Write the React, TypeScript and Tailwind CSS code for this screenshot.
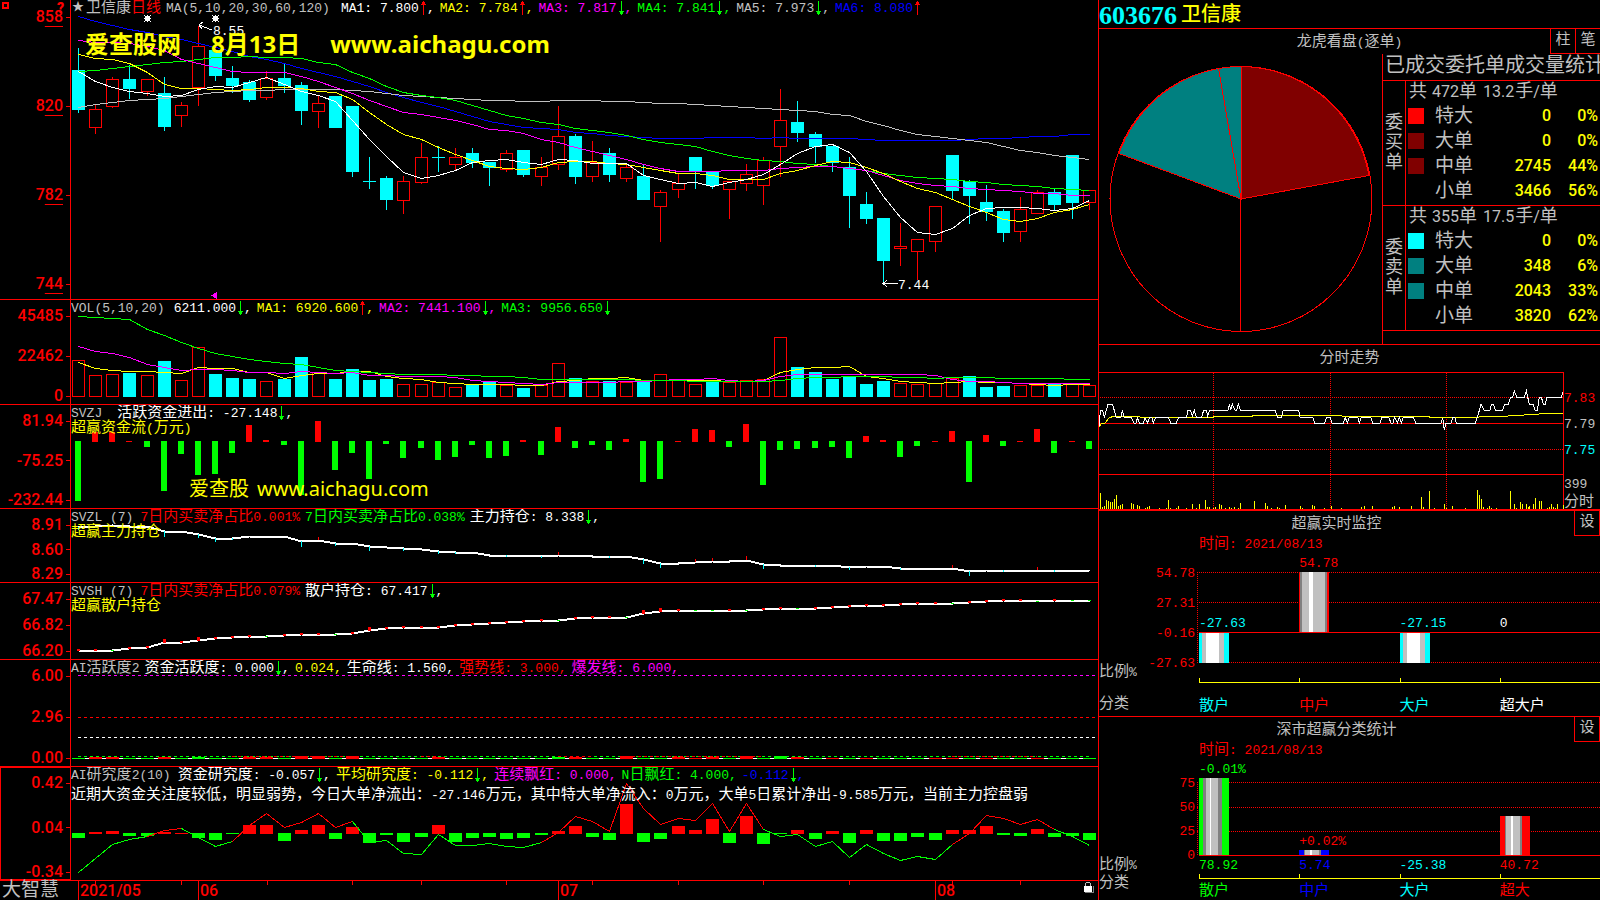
import React from "react";
import clsx from "clsx";

// [colour, high, body top, body bottom, low]
type Candle = [string, number, number, number, number];

const candles: Candle[] = [
  ["c", 48, 70, 110, 113], ["r", 105, 109, 127, 134], ["r", 77, 79, 106, 108], ["c", 65, 79, 89, 99],
  ["r", 79, 79, 91, 96], ["c", 77, 93, 127, 131], ["r", 102, 105, 115, 127], ["r", 26, 46, 87, 106],
  ["c", 50, 50, 76, 81], ["c", 66, 78, 86, 93], ["c", 80, 82, 100, 102], ["r", 71, 78, 97, 100],
  ["c", 64, 78, 86, 93], ["c", 82, 85, 111, 125], ["r", 96, 103, 111, 128], ["c", 96, 96, 128, 128],
  ["c", 106, 106, 172, 177], ["c", 157, 181, 182, 189], ["c", 176, 178, 200, 210], ["r", 176, 181, 200, 214],
  ["r", 143, 157, 182, 184], ["c", 146, 157, 158, 172], ["r", 148, 157, 164, 170], ["c", 148, 153, 163, 168],
  ["c", 162, 162, 168, 186], ["r", 150, 153, 169, 172], ["c", 150, 150, 175, 177], ["r", 157, 167, 176, 186],
  ["r", 106, 136, 164, 170], ["c", 134, 136, 177, 184], ["r", 141, 162, 176, 182], ["c", 148, 153, 175, 182],
  ["r", 163, 167, 178, 182], ["c", 164, 176, 200, 200], ["r", 190, 192, 206, 242], ["r", 174, 183, 189, 198],
  ["c", 157, 157, 171, 189], ["c", 171, 171, 186, 189], ["r", 181, 181, 189, 219], ["r", 164, 174, 183, 191],
  ["r", 157, 160, 185, 205], ["r", 89, 120, 146, 177], ["c", 101, 122, 133, 142], ["c", 132, 134, 147, 163],
  ["c", 146, 146, 163, 172], ["c", 157, 167, 196, 228], ["c", 192, 204, 219, 224], ["c", 218, 218, 261, 283],
  ["r", 223, 246, 248, 266], ["r", 239, 239, 251, 280], ["r", 206, 206, 241, 252], ["c", 155, 155, 191, 200],
  ["c", 180, 181, 196, 224], ["c", 185, 202, 212, 221], ["c", 209, 211, 233, 242], ["r", 197, 209, 231, 242],
  ["r", 190, 192, 213, 213], ["c", 188, 192, 205, 210], ["c", 155, 155, 203, 219], ["r", 190, 190, 202, 210],
];

const ma6 = [16,21,25,29,32,36,39,43,47,51,56,59,63,68,72,76,81,86,92,97,102,106,111,116,121,124,127,128,129,132,133,135,136,137,138,138,138,137,137,137,138,137,138,138,138,138,139,140,140,140,140,140,139,138,138,137,136,136,134,134];
const ma5 = [107,104,102,100,99,98,96,94,92,91,90,90,89,89,89,89,90,91,93,95,96,97,98,99,100,100,101,101,100,100,100,101,101,102,103,103,104,105,106,107,108,109,110,111,114,115,121,125,130,134,136,138,140,142,146,150,152,155,157,159];
const ma4 = [71,70,68,66,64,62,61,59,57,57,56,57,57,58,62,64,72,78,86,92,95,97,100,105,110,115,118,122,124,128,130,132,135,139,142,144,146,151,155,158,160,161,163,164,166,168,170,173,175,177,178,179,181,182,184,185,186,188,189,190];
const ma3 = [40,42,42,43,46,50,59,63,67,71,72,72,72,76,81,87,93,100,106,112,114,117,120,124,129,130,133,139,142,147,151,155,159,164,168,171,171,171,170,170,170,168,167,166,166,168,170,175,180,183,185,186,188,189,190,191,193,193,195,195];
const ma2 = [54,58,59,63,72,84,88,88,89,90,89,87,87,88,91,92,99,112,124,134,139,147,154,160,166,168,169,167,162,161,161,163,164,167,170,173,173,175,179,179,179,173,170,165,161,162,167,173,181,188,192,199,206,212,219,221,218,212,209,204];
const ma1 = [71,81,87,91,93,96,95,89,86,87,82,77,84,91,95,101,120,139,156,172,178,175,170,162,160,159,162,164,159,160,163,163,163,175,179,183,182,186,182,179,174,164,153,146,144,152,171,196,217,232,234,228,215,208,207,207,208,210,208,200];

const volColors = "rrrcrcrrcccrccrccccrrrrccrcrrcrcrcrrrcrrrrccccccrrrrcccrrcrr";
const volTops = [60,75,74,73,75,61,80,47,74,78,79,81,79,57,72,79,69,80,79,84,84,82,87,84,82,85,88,85,63,78,81,81,82,81,74,80,84,81,82,80,79,37,67,72,79,76,84,81,83,84,83,78,76,87,86,85,85,84,84,85];
const volMa3 = [16,17,18,19,29,35,42,48,53,56,59,61,63,64,67,70,71,72,73,74,74,74,75,75,76,76,77,79,79,79,79,79,79,80,80,80,81,81,81,81,81,80,78,77,77,76,76,76,77,77,78,77,77,77,78,78,78,78,79,79];
const volMa2 = [46,51,53,57,64,67,70,69,69,70,72,72,73,71,72,73,72,75,75,76,76,76,77,80,81,82,83,84,82,82,82,82,81,81,80,79,79,78,80,81,80,76,74,74,74,74,74,74,74,74,75,79,81,81,82,83,83,83,83,83];
const volMa1 = [62,68,70,71,71,72,73,67,68,68,72,72,78,75,73,73,71,71,76,78,79,82,83,84,84,84,85,85,81,80,78,78,77,80,80,80,80,80,81,81,80,72,69,67,67,66,76,78,81,82,83,82,81,82,82,83,84,85,84,84];

const flow = [-60,10,10,1,-6,-50,-13,-34,-33,-12,17,2,-4,-54,21,-29,-12,-38,-3,-17,-7,-19,-16,-4,-17,-15,2,-14,15,-7,-4,-9,3,-41,-38,1,13,12,-6,18,-44,-9,-8,-7,-6,-17,6,2,-16,-5,1,11,-41,7,-5,1,13,-12,1,-8];

const mainHold = [18,17,16,17,17,22,22,25,29,29,27,27,27,32,31,34,34,37,38,39,40,42,43,43,46,46,46,47,46,46,47,47,47,50,54,54,53,52,52,51,55,56,56,56,56,58,57,57,59,59,59,59,62,61,61,61,61,61,61,62];
const mainTicks: Record<number, number> = { 0: 3, 5: 6, 7: 4, 8: 4, 9: 2, 13: 6, 14: -3, 15: 3, 17: 5, 19: 3, 21: 3, 22: 2, 25: 2, 27: 2, 28: -3, 31: 2, 33: 5, 34: 5, 36: -3, 37: -3, 39: -4, 40: 5, 43: 2, 45: 3, 48: 2, 51: -3, 52: 5, 54: 2, 56: -3, 57: 2 };

const retailHold = [68,68,68,66,65,60,60,58,56,55,54,54,53,52,52,52,51,48,46,45,45,45,43,42,41,40,39,38,38,36,35,35,35,31,29,28,28,28,28,28,27,26,26,26,25,24,23,23,22,21,21,21,20,19,18,18,19,18,18,18];
const retailGreen = [2, 11, 15, 28, 32, 36, 37, 39, 42, 51, 56, 58, 59];
const retailTall = [5, 7, 17, 33, 34];

const activeBars: Record<number, number> = { 1: 2, 2: 2, 5: 2, 7: -2, 10: 2, 11: 2, 13: 3, 14: 3, 16: 3, 21: 2, 28: -2, 29: 2, 32: 3, 35: 2, 36: 1, 37: 2, 39: 3, 41: -3, 42: 2, 44: 1, 46: 1, 50: 1, 51: 1, 53: 1, 56: 1 };

const study = [-5,2,3,-3,-3,2,1,-5,-7,-1,9,9,-8,4,9,-6,7,-10,-2,-9,-4,9,-9,-5,-4,-6,-5,-2,3,8,-4,-7,30,-9,-6,8,4,15,-10,18,-11,-1,4,-6,3,-10,4,-8,-8,-4,-7,4,4,8,-2,-3,5,-4,-3,-7];
const studyLine = [105,91,77,72,69,63,61,70,79,74,58,46,60,55,46,60,54,75,73,86,87,67,78,78,76,79,80,75,65,49,54,64,16,41,57,51,53,36,64,36,62,69,67,79,74,90,77,86,93,89,92,77,66,48,51,57,52,62,69,78];
const studyRed = [[4, 6], [9, 16], [27, 40], [51, 57]];

const priceLine =
  "28,258 31,212 38,212 43,232 54,194 68,194 78,232 93,232 97,212 102,232 124,234 132,250 138,250 142,234 148,250 160,250 165,234 172,250 179,234 186,234 190,250 197,232 235,232 242,250 259,250 266,232 290,232 294,212 302,212 307,230 313,212 319,232 335,232 341,212 349,212 353,230 359,212 414,212 418,194 422,212 427,194 435,212 440,212 445,194 452,212 556,212 562,232 574,232 580,212 626,212 630,232 668,232 674,250 704,250 710,232 720,232 726,250 760,250 766,234 772,250 778,232 803,232 808,250 814,232 842,232 848,250 870,250 876,232 896,232 903,250 909,250 914,232 922,250 928,232 934,250 940,232 970,232 977,250 1053,250 1058,234 1063,272 1068,250 1083,250 1089,232 1094,232 1099,250 1156,250 1163,230 1173,194 1182,212 1200,212 1204,194 1210,194 1217,212 1238,212 1244,194 1255,194 1262,172 1268,172 1273,154 1280,172 1303,172 1309,154 1318,194 1329,194 1335,212 1342,212 1348,172 1354,172 1360,194 1366,194 1371,172 1414,172 1419,156";
const avgLine =
  "28,262 35,250 45,250 57,235 72,229 146,229 150,232 370,232 372,229 488,229 490,226 752,226 756,229 1016,229 1018,232 1168,232 1172,229 1255,229 1260,226 1303,226 1308,223 1348,223 1352,220 1419,220";
const minuteVol = [
  [31,459],[37,501],[43,498],[49,480],[55,483],[61,486],[67,486],[73,477],[79,465],[85,498],[91,495],[97,492],[124,489],[130,492],[142,495],[148,498],[166,504],[172,501],[178,498],[208,504],[229,504],[235,480],[241,504],[259,504],[265,498],[289,504],[307,492],[319,504],[328,492],[346,480],[352,501],[358,501],[370,504],[376,501],[388,492],[394,495],[406,504],[418,501],[424,504],[433,501],[445,504],[451,489],[493,483],[526,489],[532,498],[544,504],[562,501],[568,504],[586,495],[631,498],[637,504],[667,495],[673,498],[703,504],[724,498],[754,504],[814,501],[823,498],[847,498],[907,501],[913,498],[928,501],[964,498],[994,471],[1000,501],[1018,453],[1033,504],[1063,492],[1069,504],[1087,498],[1126,504],[1162,450],[1168,465],[1174,477],[1180,501],[1192,504],[1198,498],[1204,504],[1219,504],[1261,453],[1273,492],[1279,504],[1291,486],[1297,492],[1309,492],[1315,501],[1318,498],[1330,492],[1336,474],[1348,483],[1354,483],[1372,504],[1378,501],[1384,492],[1390,501],[1396,504],[1402,492],[1419,495],
];

const cx = (i: number) => Math.round(7 + 17.13 * i);
const pts = (data: number[], from = 0) =>
  data.map((y, i) => `${cx(i + from) + 0.5},${y + 0.5}`).join(" ");

// Chinese runs are set two pixels larger than the monospaced Latin text
function Txt({ children }: { children: string }) {
  const parts = children.split(/([\u3000-\u9fff\uff00-\uffef]+)/);
  return (
    <>
      {parts.map((p, i) =>
        i % 2 ? <span key={i} className="text-[15px]">{p}</span> : p
      )}
    </>
  );
}

function Arrow({ up }: { up?: boolean }) {
  return (
    <svg width="8" height="15" viewBox="0 0 8 15" className="shrink-0" shapeRendering="crispEdges">
      {up ? (
        <path d="M4 0h1v14h-1zM3 1h3v2h-3zM2 3h5v1h-5z" fill="#f00" />
      ) : (
        <path d="M4 0h1v14h-1zM2 10h5v1h-5zM3 11h3v2h-3z" fill="#0f0" />
      )}
    </svg>
  );
}

type ItemProps = { className: string; children: string; dir?: "up" | "down"; end?: string };

function Item({ className, children, dir, end }: ItemProps) {
  return (
    <span className={clsx("flex shrink-0 whitespace-pre", className)}>
      <span><Txt>{children}</Txt></span>
      {dir && <Arrow up={dir === "up"} />}
      {end}
    </span>
  );
}

type PanelProps = {
  className: string;
  labels: React.ReactNode[];
  height: number;
  chart: React.ReactNode;
  children: React.ReactNode;
  axisClass?: string;
};

function Panel({ className, labels, height, chart, children, axisClass }: PanelProps) {
  return (
    <section className={clsx("flex border-b border-[#f00]", className)}>
      <div
        className={clsx(
          "flex w-[71px] shrink-0 flex-col justify-between border-r border-[#f00] text-[#f00]",
          axisClass || "pt-2"
        )}
      >
        {labels.map((l, i) => (
          <div key={i} className="flex items-center justify-end gap-[3px] font-['Roboto',sans-serif] text-[16px] leading-4 font-medium">
            <span>{l}</span>
            <span className="h-px w-1 bg-[#f00]" />
          </div>
        ))}
      </div>
      <div className="relative min-w-0 flex-1 overflow-hidden">
        <svg
          className="absolute inset-0 h-full w-full"
          viewBox={`0 0 1027 ${height}`}
          preserveAspectRatio="none"
          shapeRendering="crispEdges"
          fill="none"
        >
          {chart}
        </svg>
        <div className="relative pt-px leading-[15px]">{children}</div>
      </div>
    </section>
  );
}

const priceLabel = (a: string, b: string) => (
  <>
    {a}
    <span className="underline decoration-1 underline-offset-4">{b}</span>
  </>
);

function Candles() {
  return (
    <>
      {candles.map(([c, hi, top, bot, lo], i) => {
        const x = cx(i);
        return c === "c" ? (
          <g key={i} fill="#0ff">
            <rect x={x} y={hi} width="1" height={lo - hi} />
            <rect x={x - 6} y={top} width="13" height={bot - top} />
          </g>
        ) : (
          <g key={i} stroke="#f00">
            <path d={`M${x + 0.5} ${hi}V${top}M${x + 0.5} ${bot}V${lo}`} />
            <rect x={x - 5.5} y={top + 0.5} width="12" height={bot - top} />
          </g>
        );
      })}
      <polyline points={pts(ma6)} stroke="#00f" />
      <polyline points={pts(ma5)} stroke="#c0c0c0" />
      <polyline points={pts(ma4)} stroke="#0f0" />
      <polyline points={pts(ma3)} stroke="#f0f" />
      <polyline points={pts(ma2)} stroke="#ff0" />
      <polyline points={pts(ma1)} stroke="#fff" />
      <path d="M128 25l13 5M132 22l-4 3l3 4M812 283.5h15M816 280l-4 3.5l4 3.5" stroke="#fff" />
      {[76, 144].map((x) => (
        <path key={x} d={`M${x - 2} 16h5v5h-5zM${x - 3} 15h1v1h-1zM${x} 15h1v1h-1zM${x + 3} 15h1v1h-1zM${x - 3} 21h1v1h-1zM${x} 21h1v1h-1zM${x + 3} 21h1v1h-1zM${x - 3} 18h1v1h-1zM${x + 3} 18h1v1h-1z`} fill="#fff" />
      ))}
      <path d="M140 295.5l6-4v8z" fill="#f0f" />
    </>
  );
}

function Volume() {
  return (
    <>
      {volTops.map((t, i) =>
        volColors[i] === "c" ? (
          <rect key={i} x={cx(i) - 6} y={t} width="13" height={97 - t} fill="#0ff" />
        ) : (
          <rect key={i} x={cx(i) - 5.5} y={t + 0.5} width="12" height={96 - t} stroke="#f00" />
        )
      )}
      <polyline points={pts(volMa1)} stroke="#ff0" />
      <polyline points={pts(volMa2)} stroke="#f0f" />
      <polyline points={pts(volMa3)} stroke="#0f0" />
    </>
  );
}

function Flow() {
  return (
    <>
      {flow.map((v, i) => (
        <rect key={i} x={cx(i) - 3} y={v > 0 ? 37 - v : 36} width="6" height={Math.abs(v)} fill={v > 0 ? "#f00" : "#0f0"} />
      ))}
    </>
  );
}

function MainHold() {
  return (
    <>
      <polyline points={pts(mainHold)} stroke="#fff" strokeWidth="2" />
      {Object.entries(mainTicks).map(([k, v]) => {
        const i = Number(k);
        return (
          <rect key={k} x={cx(i)} y={v > 0 ? mainHold[i] : mainHold[i] + v} width="1" height={Math.abs(v)} fill={v > 0 ? "#0ff" : "#f00"} />
        );
      })}
    </>
  );
}

function RetailHold() {
  return (
    <>
      <polyline points={pts(retailHold.map((y) => y - 1))} stroke="#fff" strokeWidth="2" />
      {retailHold.map((y, i) => {
        const green = retailGreen.includes(i);
        const h = green ? 1 : retailTall.includes(i) ? 4 : 2;
        return <rect key={i} x={cx(i) - 1} y={y - h} width="3" height={h} fill={green ? "#0f0" : "#f00"} />;
      })}
    </>
  );
}

function Activity() {
  return (
    <>
      <path d="M7 15.5H1024" stroke="#f0f" strokeDasharray="3 3" />
      <path d="M7 57.5H1024" stroke="#f00" strokeDasharray="3 3" />
      <path d="M7 77.5H1024" stroke="#fff" strokeDasharray="3 3" />
      <path d="M7 96.5H1020" stroke="#0f0" strokeDasharray="3 3" />
      {[[9, 16], [20, 21], [28, 30], [32, 40], [51, 56]].map(([a, b]) => (
        <path key={a} d={`M${cx(a)} 96.5H${cx(b)}`} stroke="#f00" strokeDasharray="3 3" />
      ))}
      <path d="M7 98.5H1024" stroke="#fff" />
      {study.map((_, i) => {
        const v = activeBars[i] || -1;
        const h = Math.abs(v);
        return <rect key={i} x={cx(i) - 6} y={99 - h} width="13" height={h} fill={v > 0 ? "#f00" : "#0f0"} />;
      })}
    </>
  );
}

function Study() {
  return (
    <>
      {study.map((v, i) => (
        <rect key={i} x={cx(i) - 6} y={v > 0 ? 67 - v : 66} width="13" height={Math.abs(v)} fill={v > 0 ? "#f00" : "#0f0"} />
      ))}
      <polyline points={pts(studyLine)} stroke="#0f0" />
      {studyRed.map(([a, b]) => (
        <polyline key={a} points={pts(studyLine.slice(a, b + 1), a)} stroke="#f00" />
      ))}
    </>
  );
}

function TimeAxis() {
  const months = ["2021/05", "06", "07", "08"];
  return (
    <footer className="flex h-[19px] shrink-0">
      <div className="w-[71px] shrink-0 pl-[2px] text-[19px] leading-[21px] text-[#c0c0c0]">大智慧</div>
      <div className="relative flex-1">
        <svg className="absolute inset-0 h-full w-full" viewBox="0 0 1027 19" preserveAspectRatio="none" shapeRendering="crispEdges">
          {[24, 110, 196, 281, 350, 435, 521, 607, 692, 778, 881, 949].map((x) => (
            <rect key={x} x={x} width="1" height="4" fill="#f00" />
          ))}
        </svg>
        <div className="relative grid h-full grid-cols-[7px_120fr_360fr_377fr_163fr] font-['Roboto',sans-serif] text-[16px] leading-[19px] font-medium text-[#f00]">
          <span />
          {months.map((m) => (
            <span key={m} className="border-l border-[#f00] pl-px">{m}</span>
          ))}
        </div>
        <svg className="absolute top-[1px] right-1 h-3 w-3" viewBox="0 0 12 12" shapeRendering="crispEdges">
          <path d="M4 0h4v1h1v3h-1v-3h-4v3h-1v-3h1z" fill="#c0c0c0" />
          <path d="M3 11h9v-7h-1v6h-8z" fill="#808080" />
          <path d="M2 4h8v6h-8z" fill="#fff" />
        </svg>
      </div>
    </footer>
  );
}

type OrderRow = [string, string, string, string];

const buyRows: OrderRow[] = [
  ["bg-[#f00]", "特大", "0", "0%"],
  ["bg-[#800000]", "大单", "0", "0%"],
  ["bg-[#800000]", "中单", "2745", "44%"],
  ["", "小单", "3466", "56%"],
];
const sellRows: OrderRow[] = [
  ["bg-[#0ff]", "特大", "0", "0%"],
  ["bg-[#008080]", "大单", "348", "6%"],
  ["bg-[#008080]", "中单", "2043", "33%"],
  ["", "小单", "3820", "62%"],
];

function Orders({ side, count, avg, rows }: { side: string; count: string; avg: string; rows: OrderRow[] }) {
  return (
    <div className="flex border-b border-[#f00]">
      <div className="flex w-[23px] items-center justify-center border-r border-[#f00] text-center text-[18px] leading-5">
        <span className="w-[18px]">{side}</span>
      </div>
      <table className="flex-1 table-fixed border-collapse">
        <thead>
          <tr className="h-6">
            <th colSpan={4} className="p-0 pl-[3px] align-top font-normal">
              <div className="flex text-[18px] leading-[22px] whitespace-nowrap">
                <span>共</span>
                <span className="ml-[5px] font-['Roboto',sans-serif] text-[16px]">{count}</span>
                <span>单</span>
                <span className="ml-[6px] font-['Roboto',sans-serif] text-[16px]">{avg}</span>
                <span className="ml-px">手</span>
                <span className="font-['Roboto',sans-serif] text-[16px]">/</span>
                <span>单</span>
              </div>
            </th>
          </tr>
        </thead>
        <tbody>
          {rows.map(([swatch, name, num, pct]) => (
            <tr key={name} className="h-[25px] font-['Roboto','Noto_Sans_CJK_SC',sans-serif] text-[16px] leading-[22px] font-medium text-[#ff0]">
              <td className="w-[29px] p-0 pt-[3px] pl-[2px] align-top"><div className={clsx("h-4 w-4", swatch)} /></td>
              <th className="w-[42px] p-0 text-left align-top text-[19px] font-normal whitespace-nowrap text-[#c0c0c0]">{name}</th>
              <td className="p-0 text-right align-top">{num}</td>
              <td className="w-[49px] p-0 pr-[2px] text-right align-top">{pct}</td>
            </tr>
          ))}
        </tbody>
      </table>
    </div>
  );
}

function Pie() {
  return (
    <svg className="w-[283px] shrink-0" viewBox="0 0 283 290" stroke="#f00" fill="none" shapeRendering="crispEdges">
      <path d="M142 145V12.500A131 132.500 0 0 1 270 121.500Z" fill="#800000" />
      <path d="M142 145L20 99.500A131 132.500 0 0 1 119.500 14.500Z" fill="#008080" />
      <path d="M142 145L119.500 14.500A131 132.500 0 0 1 142 12.500Z" fill="#008080" />
      <ellipse cx="142" cy="145" rx="131" ry="132.500" />
      <path d="M141.500 145V277" />
    </svg>
  );
}

function Minute() {
  return (
    <section className="border-b-2 border-[#f00]">
      <h2 className="h-[27px] text-center leading-7"><Txt>分时走势</Txt></h2>
      <div className="flex h-[137px]">
        <svg className="h-full min-w-0 flex-1" viewBox="27 97 1395 411" preserveAspectRatio="none" fill="none" shapeRendering="crispEdges">
          <path d="M27 98.500H1420.500V508M27 250.500H1420M27 403.500H1420" stroke="#f00" strokeWidth="3" />
          <path d="M30 172.500H1420M30 328.500H1420M370.500 100V508M721.500 100V508M1069.500 100V508" stroke="#f00" strokeWidth="3" strokeDasharray="3 3" />
          {minuteVol.map(([x, y]) => (
            <rect key={x} x={x - 1} y={y} width="3" height={508 - y} fill="#ff0" />
          ))}
          <polyline points={avgLine} stroke="#ff0" strokeWidth="3" />
          <polyline points={priceLine} stroke="#fff" strokeWidth="3" />
        </svg>
        <div className="w-[36px] shrink-0 pt-[14px] whitespace-nowrap">
          <div className="leading-[26px] text-[#f00]">7.83</div>
          <div className="leading-[26px]">7.79</div>
          <div className="leading-[26px] text-[#0ff]">7.75</div>
          <div className="mt-3 leading-[18px]">399</div>
          <div className="leading-[18px]"><Txt>分时</Txt></div>
        </div>
      </div>
    </section>
  );
}

type Col = { name: string; value: string; up: number; down: number; text: string; bar: string; under?: string; underClass?: string };

const live: Col[] = [
  { name: "散户", value: "-27.63", up: 0, down: 30, text: "text-[#0ff]", bar: "bg-[linear-gradient(90deg,#0ff_3px,#c0c0c0_3px_7px,#fff_7px_20px,#c0c0c0_20px_25px,#0ff_25px)]" },
  { name: "中户", value: "54.78", up: 60, down: 0, text: "text-[#f00]", bar: "bg-[linear-gradient(90deg,#f00_1px,#808080_1px_3px,#c0c0c0_3px_10px,#fff_10px_14px,#c0c0c0_14px_26px,#808080_26px_28px,#f00_28px)]" },
  { name: "大户", value: "-27.15", up: 0, down: 30, text: "text-[#0ff]", bar: "bg-[linear-gradient(90deg,#0ff_3px,#c0c0c0_3px_7px,#fff_7px_20px,#c0c0c0_20px_25px,#0ff_25px)]" },
  { name: "超大户", value: "0", up: 0, down: 0, text: "text-white", bar: "" },
];
const market: Col[] = [
  { name: "散户", value: "-0.01%", up: 77, down: 0, text: "text-[#0f0]", bar: "bg-[linear-gradient(90deg,#0f0_4px,#808080_4px_7px,#c0c0c0_7px_11px,#fff_11px_12px,#c0c0c0_12px_19px,#808080_19px_23px,#0f0_23px)]", under: "78.92" },
  { name: "中户", value: "+0.02%", up: 5, down: 0, text: "text-[#00f]", bar: "bg-[linear-gradient(90deg,#00f_5px,#808080_5px_6px,#c0c0c0_6px_11px,#fff_11px_13px,#c0c0c0_13px_20px,#808080_20px_22px,#00f_22px)]", under: "5.74" },
  { name: "大户", value: "", up: 0, down: 0, text: "text-[#0ff]", bar: "", under: "-25.38" },
  { name: "超大", value: "", up: 39, down: 0, text: "text-[#f00]", bar: "bg-[linear-gradient(90deg,#f00_5px,#808080_5px_6px,#c0c0c0_6px_11px,#fff_11px_13px,#c0c0c0_13px_20px,#808080_20px_22px,#f00_22px)]", under: "40.72" },
];

function Stat({ title, cols, yLabels, big }: { title: string; cols: Col[]; yLabels: string[]; big?: boolean }) {
  // big: the tall variant whose percentages stand below the zero line
  const h = big ? 94 : 107;
  const zero = big ? 93 : 76;
  const grid = big ? [20, 45, 69] : [16, 46, 106];
  return (
    <section className={clsx("text-[#c0c0c0]", big ? "flex-1" : "h-[206px] border-b border-[#f00]")}>
      <div className="flex h-[25px] justify-end">
        <h2 className="flex-1 text-center leading-7"><Txt>{title}</Txt></h2>
        <button className="w-[26px] border-r border-b border-l border-[#f00] text-[15px] leading-6">设</button>
      </div>
      <div className={clsx("flex", big ? "h-[158px]" : "h-[180px]")}>
        <div className={clsx("flex w-[40px] flex-col justify-end leading-4 whitespace-nowrap", big ? "gap-[2px] pb-2" : "gap-4 pb-[3px]")}>
          <div><Txt>比例%</Txt></div>
          <div><Txt>分类</Txt></div>
        </div>
        <div className={clsx("w-[58px] pr-[2px] text-right text-[#f00]", big ? "pt-[30px] leading-6" : "pt-[23px] leading-[30px]")}>
          {yLabels.map((y) => <div key={y}>{y}</div>)}
        </div>
        <div className="min-w-0 flex-1">
          <div className="mb-[2px] pl-[2px] leading-[18px] whitespace-pre text-[#f00]"><Txt>时间: 2021/08/13</Txt></div>
          <div className={clsx("relative", big ? "h-[94px]" : "h-[107px]")}>
            <svg className="absolute inset-0 h-full w-full" viewBox={`0 0 403 ${h}`} preserveAspectRatio="none" stroke="#f00" shapeRendering="crispEdges">
              <path d={grid.map((y) => `M0 ${y + 0.5}H403`).join("") + `M0.5 ${grid[0]}V${h}`} strokeDasharray="1 1" />
              <path d={`M2 ${zero + 0.5}H403`} />
            </svg>
            <div className="relative ml-[2px] grid h-full grid-cols-4">
              {cols.map((c) => (
                <div key={c.name} className={c.text}>
                  <div className={clsx("flex flex-col justify-end leading-4", big ? "h-[93px]" : "h-[76px]")}>
                    <span className={clsx("whitespace-nowrap", c.value[0] === "+" && "text-[#f00]")}>{c.value}</span>
                    <div className={clsx("w-[30px]", c.bar)} style={{ height: c.up }} />
                  </div>
                  <div className={clsx("mt-px w-[30px]", c.bar)} style={{ height: c.down }} />
                </div>
              ))}
            </div>
          </div>
          {big && (
            <div className="ml-[2px] grid grid-cols-4 pt-px leading-[17px]">
              {cols.map((c) => <span key={c.name} className={c.text}>{c.under}</span>)}
            </div>
          )}
          <div className={clsx("ml-[2px] grid h-[5px] grid-cols-4 border-b border-[#ff0]", !big && "mt-[15px]")}>
            {cols.map((c) => <span key={c.name} className="border-l border-[#ff0]" />)}
          </div>
          <div className={clsx("ml-[2px] grid grid-cols-4", big ? "mt-[5px] leading-4" : "mt-[15px] leading-[18px]")}>
            {cols.map((c) => <span key={c.name} className={c.text}><Txt>{c.name}</Txt></span>)}
          </div>
        </div>
      </div>
    </section>
  );
}

export default function App() {
  return (
    <main className="flex min-h-screen bg-black font-['Liberation_Mono','Noto_Sans_CJK_SC',monospace] text-[13px] text-[#c0c0c0]">
      <div className="relative flex min-w-0 flex-1 flex-col overflow-hidden">
        <Panel
          className="min-h-[300px] flex-1"
          height={299}
          axisClass="pt-[9px] pb-[7px]"
          labels={[priceLabel("8", "58"), priceLabel("8", "20"), priceLabel("7", "82"), priceLabel("7", "44")]}
          chart={<Candles />}
        >
          <div className="flex gap-[5px] pl-px">
            <span className="flex">
              <span className="text-[12px]">★</span>
              <Item className="ml-[2px]">卫信康</Item>
              <Item className="text-[#f00]">日线</Item>
            </span>
            <Item className="mr-[6px]">MA(5,10,20,30,60,120)</Item>
            <Item className="text-white" dir="up" end=",">MA1: 7.800</Item>
            <Item className="text-[#ff0]" dir="up" end=",">MA2: 7.784</Item>
            <Item className="text-[#f0f]" dir="down" end=",">MA3: 7.817</Item>
            <Item className="text-[#0f0]" dir="down" end=",">MA4: 7.841</Item>
            <Item className="text-[#c0c0c0]" dir="down" end=",">MA5: 7.973</Item>
            <Item className="text-[#00f]" dir="up">MA6: 8.080</Item>
          </div>
          <span className="absolute top-6 left-[142px] text-white">8.55</span>
          <span className="absolute top-[278px] left-[827px] text-white">7.44</span>
          <div className="absolute top-[29px] left-[14px] flex gap-[30px] font-['Noto_Sans','Noto_Sans_CJK_SC',sans-serif] text-[24px] leading-[30px] font-bold whitespace-nowrap text-[#ff0]">
            <span>爱查股网</span>
            <span>8月13日</span>
            <span>www.aichagu.com</span>
          </div>
        </Panel>
        <svg className="absolute top-[2px] left-[2px] h-2 w-2" viewBox="0 0 8 8" shapeRendering="crispEdges">
          <path d="M1 1h5v5h-5z" stroke="#f00" strokeWidth="2" fill="none" />
        </svg>
        <span className="absolute top-0 left-[57px] font-['Roboto',sans-serif] text-[14px] leading-4 font-black text-[#f00]">?</span>

        <Panel className="h-[105px]" height={104} labels={["45485", "22462", "0"]} chart={<Volume />}>
          <div className="flex gap-[5px]">
            <Item className="mr-1">VOL(5,10,20)</Item>
            <Item className="text-white" dir="down" end=",">6211.000</Item>
            <Item className="text-[#ff0]" dir="up" end=",">MA1: 6920.600</Item>
            <Item className="text-[#f0f]" dir="down" end=",">MA2: 7441.100</Item>
            <Item className="text-[#0f0]" dir="down">MA3: 9956.650</Item>
          </div>
        </Panel>

        <Panel className="h-[104px]" height={103} labels={["81.94", "-75.25", "-232.44"]} chart={<Flow />}>
          <div className="flex gap-[15px]">
            <Item className="">SVZJ</Item>
            <Item className="text-white" dir="down" end=",">活跃资金进出: -27.148</Item>
          </div>
          <div className="text-[#ff0]"><Txt>超赢资金流(万元)</Txt></div>
          <div className="absolute top-[72px] left-[118px] flex gap-2 font-['Noto_Sans','Noto_Sans_CJK_SC',sans-serif] text-[20px] leading-6 whitespace-nowrap text-[#ff0]">
            <span>爱查股</span>
            <span>www.aichagu.com</span>
          </div>
        </Panel>

        <Panel className="h-[74px]" height={73} labels={["8.91", "8.60", "8.29"]} chart={<MainHold />}>
          <div className="flex gap-[5px]">
            <Item className="mr-[2px]">SVZL (7)</Item>
            <Item className="text-[#f00]">7日内买卖净占比0.001%</Item>
            <Item className="text-[#0f0]">7日内买卖净占比0.038%</Item>
            <Item className="text-white" dir="down" end=",">主力持仓: 8.338</Item>
          </div>
          <div className="text-[#ff0]"><Txt>超赢主力持仓</Txt></div>
        </Panel>

        <Panel className="h-[77px]" height={76} labels={["67.47", "66.82", "66.20"]} chart={<RetailHold />}>
          <div className="flex gap-[5px]">
            <Item className="mr-[2px]">SVSH (7)</Item>
            <Item className="text-[#f00]">7日内买卖净占比0.079%</Item>
            <Item className="text-white" dir="down" end=",">散户持仓: 67.417</Item>
          </div>
          <div className="text-[#ff0]"><Txt>超赢散户持仓</Txt></div>
        </Panel>

        <Panel className="h-[107px]" height={106} labels={["6.00", "2.96", "0.00"]} chart={<Activity />}>
          <div className="flex gap-[5px]">
            <Item className="">AI活跃度2</Item>
            <Item className="text-white" dir="down" end=",">资金活跃度: 0.000</Item>
            <Item className="text-[#ff0]">0.024,</Item>
            <Item className="text-white">生命线: 1.560,</Item>
            <Item className="text-[#f00]">强势线: 3.000,</Item>
            <Item className="text-[#f0f]">爆发线: 6.000,</Item>
          </div>
        </Panel>

        <Panel
          className="h-[114px]"
          height={113}
          labels={["0.42", "0.04", "-0.34"]}
          chart={<Study />}
          axisClass="pt-2 outline outline-[#f00] -outline-offset-1"
        >
          <div className="flex gap-[5px]">
            <Item className="mr-[2px]">AI研究度2(10)</Item>
            <Item className="text-white" dir="down" end=",">资金研究度: -0.057</Item>
            <Item className="text-[#ff0]" dir="down" end=",">平均研究度: -0.112</Item>
            <Item className="text-[#f0f]">连续飘红: 0.000,</Item>
            <Item className="text-[#0f0]">N日飘红: 4.000,</Item>
            <Item className="text-[#00f]" dir="down" end=",">-0.112</Item>
          </div>
          <p className="mt-[5px] whitespace-nowrap text-white">
            <Txt>近期大资金关注度较低，明显弱势，今日大单净流出：-27.146万元，其中特大单净流入：0万元，大单5日累计净出-9.585万元，当前主力控盘弱</Txt>
          </p>
        </Panel>
        <TimeAxis />
      </div>

      <aside className="flex w-[502px] shrink-0 flex-col overflow-hidden border-l border-[#f00]">
        <header className="flex h-[29px] items-center gap-1 border-b border-[#f00] pt-1 leading-[24px]">
          <span className="font-['Liberation_Serif',serif] text-[26px] font-bold text-[#0ff]">603676</span>
          <h1 className="text-[20px] font-medium text-[#ff0]">卫信康</h1>
        </header>

        <section className="flex h-[316px] flex-col border-b border-[#f00]">
          <div className="flex h-[25px]">
            <h2 className="flex-1 pl-[50px] text-center leading-7"><Txt>龙虎看盘(逐单)</Txt></h2>
            <button className="w-[25px] border-b border-l border-[#f00] text-[15px] leading-6">柱</button>
            <button className="w-[25px] border-b border-l border-[#f00] text-[15px] leading-6">笔</button>
          </div>
          <div className="flex min-h-0 flex-1">
            <Pie />
            <div className="min-w-0 flex-1 overflow-hidden border-l border-[#f00]">
              <h3 className="h-[27px] overflow-hidden border-b border-[#f00] pl-[2px] text-[20px] leading-[26px] whitespace-nowrap">
                已成交委托单成交量统计
              </h3>
              <Orders side="委买单" count="472" avg="13.2" rows={buyRows} />
              <Orders side="委卖单" count="355" avg="17.5" rows={sellRows} />
            </div>
          </div>
        </section>

        <Minute />
        <Stat title="超赢实时监控" cols={live} yLabels={["54.78", "27.31", "-0.16", "-27.63"]} />
        <Stat title="深市超赢分类统计" cols={market} yLabels={["75", "50", "25", "0"]} big />
      </aside>
    </main>
  );
}
